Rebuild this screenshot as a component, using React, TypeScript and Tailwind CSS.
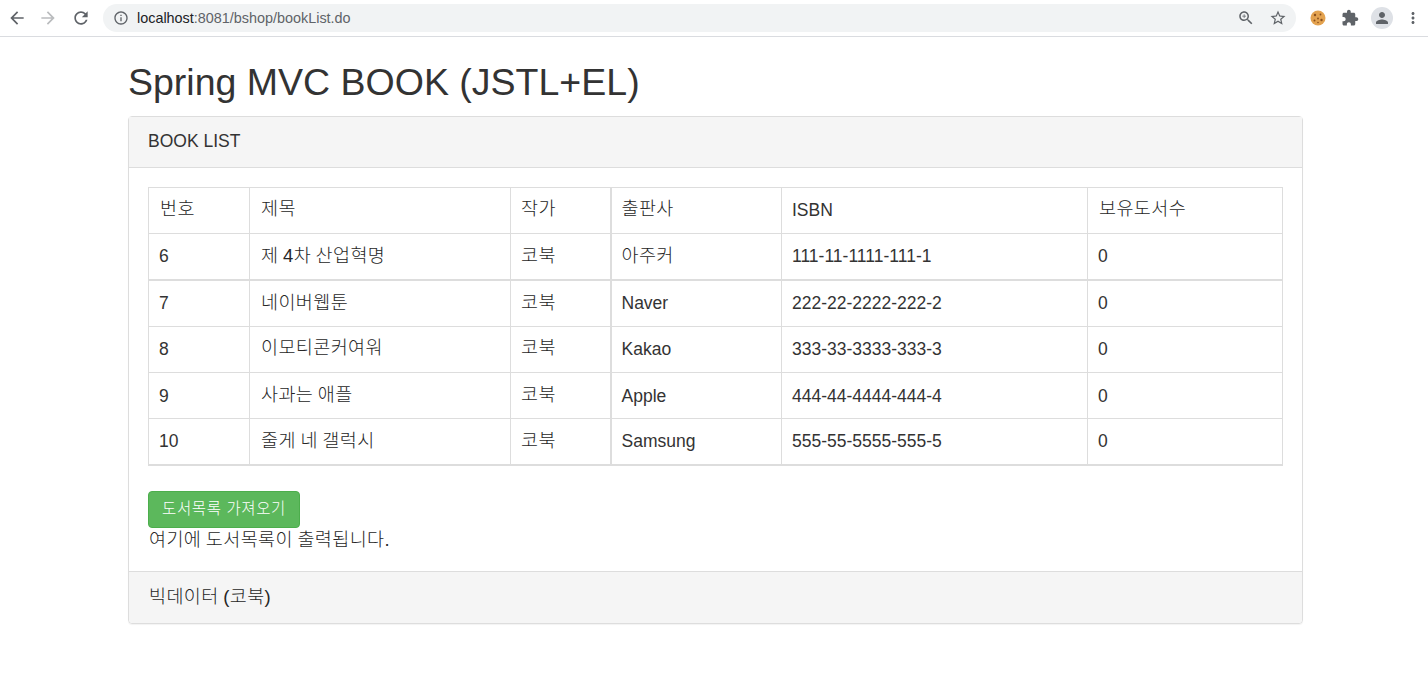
import type { ReactNode } from "react";

const headers = ["번호", "제목", "작가", "출판사", "ISBN", "보유도서수"];

const books = [
  { no: "6", title: "제 4차 산업혁명", author: "코북", pub: "아주커", isbn: "111-11-1111-111-1", stock: "0" },
  { no: "7", title: "네이버웹툰", author: "코북", pub: "Naver", isbn: "222-22-2222-222-2", stock: "0" },
  { no: "8", title: "이모티콘커여워", author: "코북", pub: "Kakao", isbn: "333-33-3333-333-3", stock: "0" },
  { no: "9", title: "사과는 애플", author: "코북", pub: "Apple", isbn: "444-44-4444-444-4", stock: "0" },
  { no: "10", title: "줄게 네 갤럭시", author: "코북", pub: "Samsung", isbn: "555-55-5555-555-5", stock: "0" },
];

const cell = "h-[46px] border border-[#ddd] px-[10px] align-middle font-normal text-left";

// hangul runs a little wider than the latin text in the screenshot
const Ko = ({ children, nudge }: { children: ReactNode; nudge?: boolean }) => (
  <span className={`align-[1px] text-[18.5px] font-light tracking-[0.4px] text-[#262626] [word-spacing:-1px] ${nudge ? "ml-px" : ""}`}>{children}</span>
);

const Icon = ({ d, size, className }: { d: string; size: number; className: string }) => (
  <svg width={size} height={size} viewBox="0 0 24 24" className={`shrink-0 ${className}`} fill="currentColor">
    <path d={d} />
  </svg>
);

const App = () => {
  return (
    <div className="h-[674px] overflow-hidden bg-white font-['Liberation_Sans','Noto_Sans_CJK_KR',sans-serif] text-[17.5px] leading-[26px] text-[#333]">
      <div className="flex h-[37px] items-center border-b border-[#dadce0] pl-[7px]">
        <Icon size={20} className="text-[#5f6368]" d="M20 11H7.83l5.59-5.59L12 4l-8 8 8 8 1.41-1.41L7.83 13H20v-2z" />
        <Icon size={20} className="ml-[11px] text-[#babcbe]" d="M12 4l-1.41 1.41L16.17 11H4v2h12.17l-5.58 5.59L12 20l8-8z" />
        <Icon size={20} className="ml-[13px] text-[#5f6368]" d="M17.65 6.35C16.2 4.9 14.21 4 12 4c-4.42 0-7.99 3.58-7.99 8s3.57 8 7.99 8c3.73 0 6.84-2.55 7.73-6h-2.08c-.82 2.33-3.04 4-5.65 4-3.31 0-6-2.69-6-6s2.69-6 6-6c1.66 0 3.14.69 4.22 1.78L13 11h7V4l-2.35 2.35z" />
        <div className="ml-[12px] flex h-[28px] w-[1193px] shrink-0 items-center rounded-full bg-[#f1f3f4] pl-[10px] pr-[9px]">
          <Icon size={16} className="text-[#5f6368]" d="M11 7h2v2h-2zm0 4h2v6h-2zm1-9C6.48 2 2 6.48 2 12s4.48 10 10 10 10-4.48 10-10S17.52 2 12 2zm0 18c-4.41 0-8-3.59-8-8s3.59-8 8-8 8 3.59 8 8-3.59 8-8 8z" />
          <span className="ml-[8px] text-[14.4px] text-[#5f6368]">
            <span className="text-[#202124]">localhost</span>:8081/bshop/bookList.do
          </span>
          <Icon size={18} className="ml-auto text-[#5f6368]" d="M15.5 14h-.79l-.28-.27C15.41 12.59 16 11.11 16 9.5 16 5.91 13.09 3 9.5 3S3 5.91 3 9.5 5.91 16 9.5 16c1.61 0 3.09-.59 4.23-1.57l.27.28v.79l5 4.99L20.49 19l-4.99-5zm-6 0C7.01 14 5 11.99 5 9.5S7.01 5 9.5 5 14 7.01 14 9.5 11.99 14 9.5 14zM10 7H9v2H7v1h2v2h1v-2h2V9h-2z" />
          <Icon size={18} className="ml-[14px] text-[#5f6368]" d="M22 9.24l-7.19-.62L12 2 9.19 8.63 2 9.24l5.46 4.73L5.82 21 12 17.27 18.18 21l-1.63-7.03L22 9.24zM12 15.4l-3.76 2.27 1-4.28-3.32-2.88 4.38-.38L12 6.1l1.71 4.04 4.38.38-3.32 2.88 1 4.28L12 15.4z" />
        </div>
        <svg width="16" height="16" viewBox="0 0 16 16" className="ml-[14px] shrink-0">
          <circle cx="8" cy="8" r="7.5" fill="#e3a24f" />
          <circle cx="5" cy="5" r="1.2" fill="#8a4f1d" />
          <circle cx="10.5" cy="4.5" r="0.9" fill="#8a4f1d" />
          <circle cx="8" cy="8.5" r="0.9" fill="#8a4f1d" />
          <circle cx="4.5" cy="10.5" r="1" fill="#8a4f1d" />
          <circle cx="11.5" cy="10" r="1.2" fill="#8a4f1d" />
          <circle cx="8" cy="12.5" r="0.8" fill="#8a4f1d" />
        </svg>
        <Icon size={18} className="ml-[15px] text-[#5f6368]" d="M20.5 11H19V7c0-1.1-.9-2-2-2h-4V3.5C13 2.12 11.88 1 10.5 1S8 2.12 8 3.5V5H4c-1.1 0-1.99.9-1.99 2v3.8H3.5c1.49 0 2.7 1.21 2.7 2.7s-1.21 2.7-2.7 2.7H2V20c0 1.1.9 2 2 2h3.8v-1.5c0-1.49 1.21-2.7 2.7-2.7 1.49 0 2.7 1.21 2.7 2.7V22H17c1.1 0 2-.9 2-2v-4h1.5c1.38 0 2.5-1.12 2.5-2.5S21.88 11 20.5 11z" />
        <div className="ml-[12px] flex h-[22px] w-[22px] shrink-0 items-center justify-center rounded-full bg-[#dee1e6]">
          <Icon size={18} className="text-[#5f6368]" d="M12 12c2.21 0 4-1.79 4-4s-1.79-4-4-4-4 1.79-4 4 1.79 4 4 4zm0 2c-2.67 0-8 1.34-8 4v2h16v-2c0-2.66-5.33-4-8-4z" />
        </div>
        <Icon size={18} className="ml-[11px] text-[#5f6368]" d="M12 8c1.1 0 2-.9 2-2s-.9-2-2-2-2 .9-2 2 .9 2 2 2zm0 2c-1.1 0-2 .9-2 2s.9 2 2 2 2-.9 2-2-.9-2-2-2zm0 6c-1.1 0-2 .9-2 2s.9 2 2 2 2-.9 2-2-.9-2-2-2z" />
      </div>

      <div className="ml-[128px] w-[1175px]">
        <h1 className="mt-[21px] mb-[10px] text-[37.5px] leading-[48px] font-normal">Spring MVC BOOK (JSTL+EL)</h1>

        <div className="rounded border border-[#ddd] shadow-[0_1px_1px_rgba(0,0,0,0.05)]">
          <div className="flex h-[51px] items-center border-b border-[#ddd] bg-[#f5f5f5] px-[19px] pb-[2px]">BOOK LIST</div>

          <div className="h-[403px] px-[19px] pt-[19px]">
            <table className="w-[1134px] table-fixed border-collapse border-b-2 border-[#ddd]">
              <colgroup>
                <col className="w-[101px]" />
                <col className="w-[261px]" />
                <col className="w-[100px]" />
                <col className="w-[171px]" />
                <col className="w-[306px]" />
                <col className="w-[195px]" />
              </colgroup>
              <thead>
                <tr>
                  {headers.map((h, i) => (
                    <th key={h} className={`${cell} pb-[2px] ${i === 3 ? "border-l-2" : ""}`}>
                      {h === "ISBN" ? h : <Ko nudge={i < 2 || i === 5}>{h}</Ko>}
                    </th>
                  ))}
                </tr>
              </thead>
              <tbody>
                {books.map((b, i) => (
                  <tr key={b.no} className={i === 0 ? "border-b-2 border-[#ddd]" : i === 1 ? "h-[47px]" : i === 2 ? "[&>td]:pb-[2px]" : ""}>
                    <td className={cell}>{b.no}</td>
                    <td className={cell}>
                      <Ko nudge>{b.title}</Ko>
                    </td>
                    <td className={cell}>
                      <Ko>{b.author}</Ko>
                    </td>
                    <td className={`${cell} border-l-2`}>{i === 0 ? <Ko>{b.pub}</Ko> : b.pub}</td>
                    <td className={cell}>{b.isbn}</td>
                    <td className={cell}>{b.stock}</td>
                  </tr>
                ))}
              </tbody>
            </table>

            <button className="mt-[25px] block h-[37px] w-[152px] rounded border border-[#4cae4c] bg-[#5cb85c] text-[15.5px] leading-none font-light tracking-[0.6px] text-white">
              도서목록 가져오기
            </button>
            <p className="-mt-px">
              <Ko nudge>여기에 도서목록이 출력됩니다.</Ko>
            </p>
          </div>

          <div className="flex h-[52px] items-center rounded-b border-t border-[#ddd] bg-[#f5f5f5] px-[19px] pb-[2px]">
            <Ko nudge>빅데이터 (코북)</Ko>
          </div>
        </div>
      </div>
    </div>
  );
};

export default App;
